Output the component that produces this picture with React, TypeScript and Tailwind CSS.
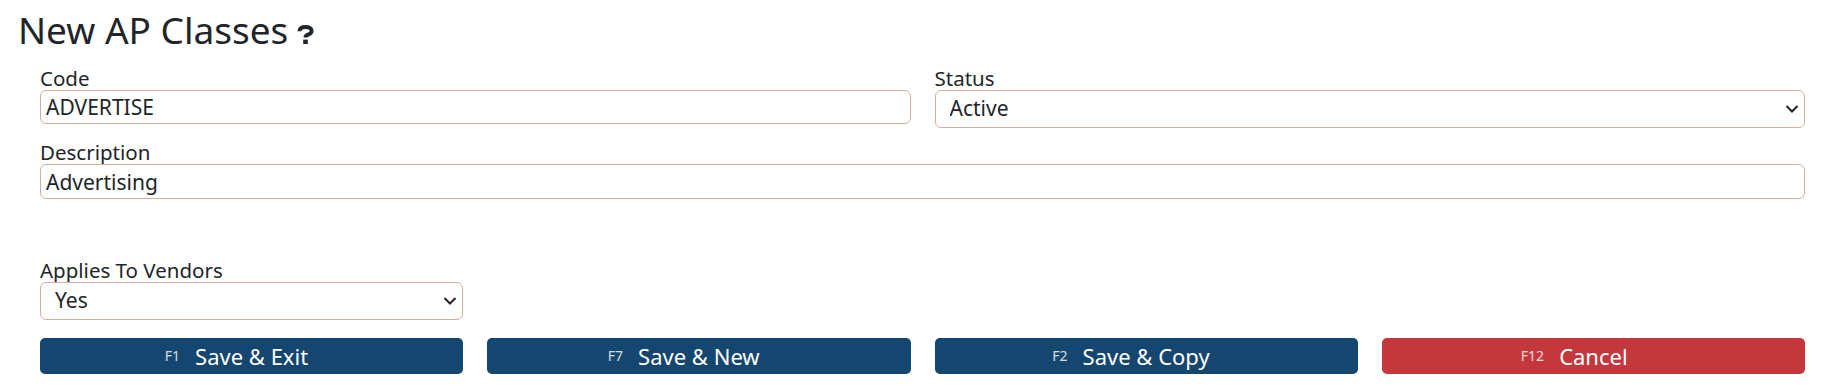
import { useState } from 'react'

const font = { fontFamily: '"Noto Sans", "Open Sans", sans-serif' }

function Chevron() {
  return (
    <svg
      className="pointer-events-none absolute right-[6px] top-1/2 -translate-y-1/2"
      width="14"
      height="9"
      viewBox="0 0 14 9"
      fill="none"
    >
      <path d="M1.5 1.5L7 7L12.5 1.5" stroke="#222" strokeWidth="2" />
    </svg>
  )
}

// wide bold question mark next to the title
function HelpIcon() {
  return (
    <svg width="21" height="19" viewBox="0 0 21 19" fill="none" className="ml-[7px]">
      <path
        d="M4.4 6.2C4.4 3.2 7 2 10.5 2C14 2 16.6 3.4 16.6 5.9C16.6 8.1 14.9 8.9 13 9.6C11.4 10.2 10.5 10.8 10.5 12.6"
        stroke="#212529"
        strokeWidth="4"
      />
      <rect x="8.2" y="14.6" width="4.6" height="4.4" fill="#212529" />
    </svg>
  )
}

function Field({ label, children }: { label: string; children: React.ReactNode }) {
  return (
    <div className="flex flex-col">
      <label className="text-[20.5px] leading-[24px] text-[#212529]">{label}</label>
      {children}
    </div>
  )
}

function SelectBox({ value, options, onChange }: { value: string; options: string[]; onChange: (v: string) => void }) {
  return (
    <div className="relative">
      <select
        value={value}
        onChange={(e) => onChange(e.target.value)}
        className="h-[38px] w-full appearance-none rounded-[6px] border border-[#d6aca2] bg-white pl-[14px] pr-8 text-[21px] text-[#212529] outline-none"
        style={font}
      >
        {options.map((o) => (
          <option key={o}>{o}</option>
        ))}
      </select>
      <Chevron />
    </div>
  )
}

function ActionButton({ fkey, label, danger }: { fkey: string; label: string; danger?: boolean }) {
  return (
    <button
      type="button"
      className={
        'flex h-[36px] items-center justify-center rounded-[5px] text-white ' +
        (danger ? 'bg-[#c4373c]' : 'bg-[#15466f]')
      }
    >
      <span className="relative text-[22px] leading-none">
        <span className="absolute right-full top-1/2 mr-[15px] -translate-y-1/2 text-[14px] text-white/80">
          {fkey}
        </span>
        {label}
      </span>
    </button>
  )
}

export default function App() {
  const [code, setCode] = useState('ADVERTISE')
  const [desc, setDesc] = useState('Advertising')
  const [status, setStatus] = useState('Active')
  const [applies, setApplies] = useState('Yes')

  return (
    <div className="min-h-[388px] bg-white pb-4" style={font}>
      <h1 className="flex items-baseline pl-[18px] pt-[6px] text-[37px] leading-[48px] text-[#212529]">
        New AP Classes
        <HelpIcon />
      </h1>

      <div className="px-10 pt-[12px]">
        <div className="grid grid-cols-2 gap-x-6">
          <Field label="Code">
            <input
              value={code}
              onChange={(e) => setCode(e.target.value)}
              className="h-[34px] rounded-[6px] border border-[#d6aca2] px-[5px] text-[21px] text-[#212529] outline-none"
            />
          </Field>
          <Field label="Status">
            <SelectBox value={status} options={['Active', 'Inactive']} onChange={setStatus} />
          </Field>
        </div>

        <div className="mt-[12px]">
          <Field label="Description">
            <input
              value={desc}
              onChange={(e) => setDesc(e.target.value)}
              className="h-[35px] rounded-[6px] border border-[#d6aca2] px-[5px] text-[21px] text-[#212529] outline-none"
            />
          </Field>
        </div>

        <div className="mt-[59px] grid grid-cols-4 gap-x-6">
          <Field label="Applies To Vendors">
            <SelectBox value={applies} options={['Yes', 'No']} onChange={setApplies} />
          </Field>
        </div>

        <div className="mt-[18px] grid grid-cols-4 gap-x-6">
          <ActionButton fkey="F1" label="Save & Exit" />
          <ActionButton fkey="F7" label="Save & New" />
          <ActionButton fkey="F2" label="Save & Copy" />
          <ActionButton fkey="F12" label="Cancel" danger />
        </div>
      </div>
    </div>
  )
}
